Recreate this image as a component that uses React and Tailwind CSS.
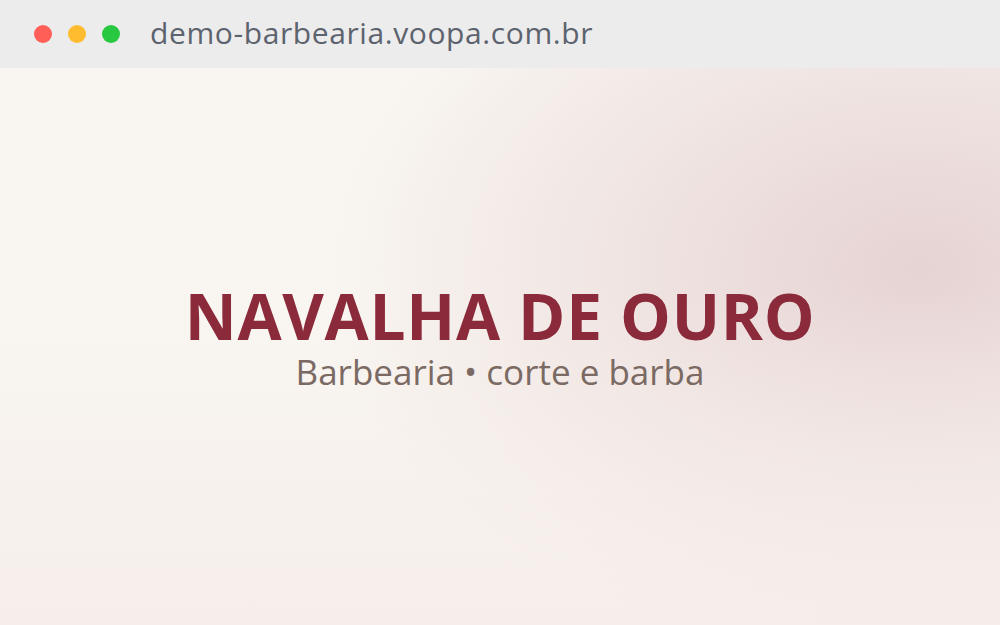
import React from "react";

function App() {
  return (
    <div className="w-[1000px] h-[625px] flex flex-col overflow-hidden font-['Open_Sans',sans-serif]">
      <div className="h-[68px] shrink-0 bg-[#ececec] flex items-center pl-[34px]">
        <div className="flex gap-[16px]">
          <span className="w-[18px] h-[18px] rounded-full bg-[#ff5f57]"></span>
          <span className="w-[18px] h-[18px] rounded-full bg-[#febc2e]"></span>
          <span className="w-[18px] h-[18px] rounded-full bg-[#28c840]"></span>
        </div>
        <div className="ml-[30px] text-[30px] leading-none text-[#5c636e] tracking-[0.6px] -mt-[2px]">
          demo-barbearia.voopa.com.br
        </div>
      </div>

      <div className="flex-1 relative bg-[#f9f6f1] flex flex-col items-center justify-center">
        <div className="absolute inset-0 bg-[radial-gradient(ellipse_60%_70%_at_92%_36%,#e6d3d3_0%,rgba(230,211,211,0)_100%)]"></div>
        <div className="absolute inset-0 bg-[linear-gradient(180deg,rgba(245,236,233,0)_40%,rgba(245,236,233,0.8)_100%)]"></div>
        <div className="relative flex flex-col items-center -mt-[20px]">
          <h1 className="text-[64px] leading-none font-bold text-[#8b2a3a] tracking-[0.7px]">
            NAVALHA DE OURO
          </h1>
          <p className="mt-[6px] text-[35px] leading-none text-[#7a6a63]">
            Barbearia • corte e barba
          </p>
        </div>
      </div>
    </div>
  );
}

export default App;
